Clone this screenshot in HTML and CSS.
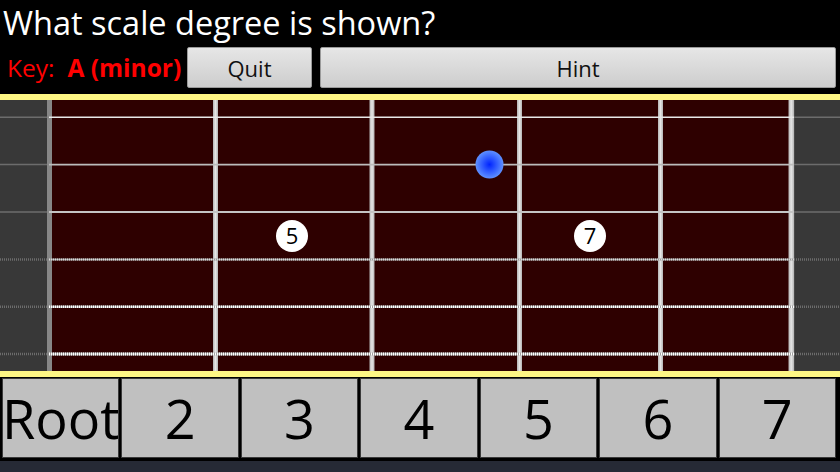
FILE: index.html
```html
<!DOCTYPE html>
<html>
<head>
<meta charset="utf-8">
<link rel="stylesheet" href="styles.css">
</head>
<body>
<div class="app">
  <div class="title">What scale degree is shown?</div>
  <div class="toolbar">
    <div class="key"><span class="key-label">Key:</span><span class="key-value">A (minor)</span></div>
    <button class="btn quit">Quit</button>
    <button class="btn hint">Hint</button>
  </div>
  <div class="rail"></div>
  <div class="board">
    <svg width="840" height="271" viewBox="0 0 840 271" xmlns="http://www.w3.org/2000/svg">
      <defs>
        <linearGradient id="fret" x1="0" y1="0" x2="1" y2="0">
          <stop offset="0" stop-color="#b4b4b4"/>
          <stop offset="0.5" stop-color="#e6e6e6"/>
          <stop offset="1" stop-color="#b4b4b4"/>
        </linearGradient>
        <radialGradient id="blue" cx="0.5" cy="0.5" r="0.5">
          <stop offset="0" stop-color="#0024ff"/>
          <stop offset="1" stop-color="#5e90ff"/>
        </radialGradient>
      </defs>
      <rect x="0" y="0" width="840" height="271" fill="#383838"/>
      <rect x="52" y="0" width="737" height="271" fill="#2e0000"/>
      <rect x="47" y="0" width="5" height="271" fill="#878787"/>
      <rect x="794" y="0" width="1" height="271" fill="#4a4a4a"/>
      <rect x="213" y="0" width="5" height="271" fill="url(#fret)"/>
      <rect x="369.5" y="0" width="5" height="271" fill="url(#fret)"/>
      <rect x="517" y="0" width="5" height="271" fill="url(#fret)"/>
      <rect x="658" y="0" width="5" height="271" fill="url(#fret)"/>
      <rect x="788.5" y="0" width="5.5" height="271" fill="url(#fret)"/>

      <!-- strings in the grey side areas -->
      <g stroke="#6c6c6c" stroke-width="1.5">
        <line x1="0" y1="17.3" x2="47" y2="17.3"/>
        <line x1="0" y1="64.6" x2="47" y2="64.6"/>
        <line x1="0" y1="112" x2="47" y2="112"/>
        <line x1="794" y1="17.3" x2="840" y2="17.3"/>
        <line x1="794" y1="64.6" x2="840" y2="64.6"/>
        <line x1="794" y1="112" x2="840" y2="112"/>
      </g>
      <g stroke="#6c6c6c" stroke-width="2.5" stroke-dasharray="1 1">
        <line x1="0" y1="159.4" x2="47" y2="159.4"/>
        <line x1="0" y1="206.7" x2="47" y2="206.7"/>
        <line x1="0" y1="254" x2="47" y2="254"/>
        <line x1="794" y1="159.4" x2="840" y2="159.4"/>
        <line x1="794" y1="206.7" x2="840" y2="206.7"/>
        <line x1="794" y1="254" x2="840" y2="254"/>
      </g>

      <!-- strings on the fretboard -->
      <line x1="49" y1="17.3" x2="794" y2="17.3" stroke="#e8e8e8" stroke-width="1.5"/>
      <line x1="49" y1="64.6" x2="794" y2="64.6" stroke="#bcbcbc" stroke-width="1.8"/>
      <line x1="49" y1="112" x2="794" y2="112" stroke="#c4c4c4" stroke-width="2"/>
      <line x1="49" y1="159.4" x2="794" y2="159.4" stroke="#9a9a9a" stroke-width="2"/>
      <line x1="49" y1="159.4" x2="794" y2="159.4" stroke="#d8d8d8" stroke-width="2" stroke-dasharray="1 1"/>
      <line x1="49" y1="206.7" x2="794" y2="206.7" stroke="#a0a0a0" stroke-width="2.6"/>
      <line x1="49" y1="206.7" x2="794" y2="206.7" stroke="#ffffff" stroke-width="2.6" stroke-dasharray="1 1"/>
      <line x1="49" y1="254" x2="794" y2="254" stroke="#a0a0a0" stroke-width="2.8"/>
      <line x1="49" y1="254" x2="794" y2="254" stroke="#ffffff" stroke-width="2.8" stroke-dasharray="1 1"/>

      <!-- markers -->
      <circle cx="292" cy="136" r="16" fill="#ffffff"/>
      <text x="292" y="144" class="dot-text" text-anchor="middle">5</text>
      <circle cx="590" cy="136" r="16" fill="#ffffff"/>
      <text x="590" y="144" class="dot-text" text-anchor="middle">7</text>
      <circle cx="489.5" cy="64.5" r="14" fill="url(#blue)"/>
    </svg>
  </div>
  <div class="rail"></div>
  <div class="answers">
    <button class="answer">Root</button>
    <button class="answer">2</button>
    <button class="answer">3</button>
    <button class="answer">4</button>
    <button class="answer">5</button>
    <button class="answer">6</button>
    <button class="answer">7</button>
  </div>
  <div class="navbar"></div>
</div>
</body>
</html>
```

FILE: styles.css
```css
html, body {
  margin: 0;
  padding: 0;
  background: #000;
}

.app {
  width: 840px;
  height: 472px;
  overflow: hidden;
  display: flex;
  flex-direction: column;
  background: #000;
  font-family: "Open Sans", "DejaVu Sans", sans-serif;
}

.title {
  color: #fff;
  font-size: 32.5px;
  line-height: 40px;
  height: 40px;
  padding: 3px 0 0 3px;
  white-space: nowrap;
}

.toolbar {
  display: flex;
  align-items: center;
  height: 41px;
  padding: 4px 4px 0 0;
  margin-bottom: 6px;
  gap: 8px;
}

.key {
  width: 172px;
  padding-left: 7px;
  color: #ff0000;
  font-size: 24.5px;
  white-space: nowrap;
  display: flex;
  gap: 13px;
}

.key-value {
  font-weight: bold;
}

.btn {
  height: 41px;
  margin: 0;
  padding: 0;
  border: 1px solid #9a9a9a;
  border-radius: 2px;
  background: linear-gradient(#e6e6e6, #cdcdcd);
  color: #111;
  font-family: "Open Sans", "DejaVu Sans", sans-serif;
  font-size: 22px;
}

.quit {
  width: 125px;
}

.hint {
  flex: 1;
}

.rail {
  height: 6px;
  background: #fdf684;
  flex: none;
}

.board {
  height: 271px;
  flex: none;
  line-height: 0;
}

.board svg {
  display: block;
}

.dot-text {
  font-family: "Open Sans", "DejaVu Sans", sans-serif;
  font-size: 22px;
  fill: #000;
}

.answers {
  flex: none;
  display: grid;
  grid-template-columns: repeat(7, 1fr);
  gap: 2px;
  padding: 1px 4px 3px 2px;
  height: 80px;
  background: #000;
}

.answer {
  margin: 0;
  padding: 0;
  height: 80px;
  border: 1px solid #3a3a3a;
  background: #c0c0c0;
  color: #000;
  font-family: "Open Sans", "DejaVu Sans", sans-serif;
  font-size: 54px;
  overflow: hidden;
  white-space: nowrap;
  display: flex;
  align-items: center;
  justify-content: center;
}

.navbar {
  flex: none;
  height: 11px;
  background: #262a35;
}
```
